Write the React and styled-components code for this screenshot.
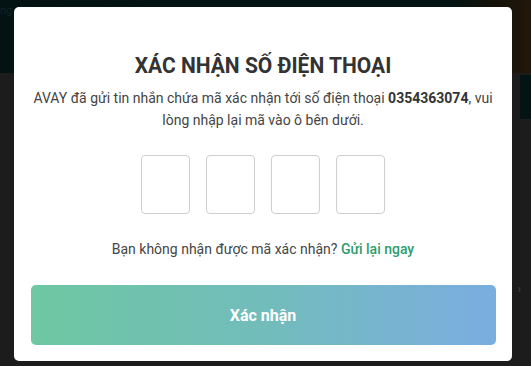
import styled, { createGlobalStyle } from "styled-components";

const Global = createGlobalStyle`
  html, body {
    margin: 0;
    padding: 0;
    background: #1c1c1c;
    font-family: Roboto, "Liberation Sans", sans-serif;
  }
  * { box-sizing: border-box; }
`;

const Page = styled.div`
  position: relative;
  width: 531px;
  height: 366px;
  overflow: hidden;
  background: #1c1c1c;
`;

const Header = styled.div`
  height: 73px;
  background: linear-gradient(90deg, #031212 0%, #041313 85%, #15120a 93%, #22170a 100%);
  color: #142222;
  font-size: 11px;
  padding: 4px 0 0 0;
`;

const SideBlock = styled.div`
  margin-left: auto;
  width: 11px;
  height: 44px;
  background: #041414;
`;

const Arrow = styled.span`
  position: absolute;
  right: 10px;
  top: 282px;
  color: #444;
  font-size: 12px;
`;

const Modal = styled.div`
  position: absolute;
  left: 14px;
  top: 7px;
  width: 498px;
  height: 354px;
  background: #fff;
  border-radius: 5px;
  padding: 45px 16px 16px;
  display: flex;
  flex-direction: column;
  align-items: center;
`;

const Title = styled.h2`
  margin: 0;
  font-size: 21px;
  font-weight: 700;
  color: #333;
  line-height: 28px;
  transform: scaleY(1.06);
`;

const Desc = styled.p`
  margin: 7px 0 0;
  width: 460px;
  text-align: center;
  font-size: 14px;
  line-height: 22px;
  color: #444;

  b { font-weight: 700; color: #333; }
`;

const Codes = styled.div`
  display: flex;
  gap: 16px;
  margin-top: 24px;
`;

const CodeBox = styled.input`
  width: 49px;
  height: 59px;
  border: 1px solid #cfcfcf;
  border-radius: 4px;
  background: #fff;
  text-align: center;
  font-size: 22px;
  outline: none;
`;

const Resend = styled.p`
  margin: 26px 0 0;
  font-size: 14px;
  color: #444;
  line-height: 18px;
`;

const ResendLink = styled.a`
  color: #2e9c6e;
  font-weight: 500;
  text-decoration: none;
`;

const Submit = styled.button`
  margin-top: auto;
  width: 465px;
  height: 60px;
  border: none;
  border-radius: 5px;
  background: linear-gradient(90deg, #6ec8a2 0%, #72bcbb 50%, #7badE1 100%);
  color: #fff;
  font-family: Roboto, "Liberation Sans", sans-serif;
  font-size: 16px;
  font-weight: 700;
`;

export default function App() {
  return (
    <Page>
      <Global />
      <Header>
        <span>ng c</span>
        <SideBlock style={{ marginTop: 58 }} />
      </Header>
      <Arrow>›</Arrow>
      <Modal>
        <Title>XÁC NHẬN SỐ ĐIỆN THOẠI</Title>
        <Desc>
          AVAY đã gửi tin nhắn chứa mã xác nhận tới số điện thoại <b>0354363074</b>, vui lòng nhập lại mã vào ô bên dưới.
        </Desc>
        <Codes>
          {[0, 1, 2, 3].map((i) => (
            <CodeBox key={i} maxLength={1} />
          ))}
        </Codes>
        <Resend>
          Bạn không nhận được mã xác nhận? <ResendLink href="#">Gửi lại ngay</ResendLink>
        </Resend>
        <Submit>Xác nhận</Submit>
      </Modal>
    </Page>
  );
}
